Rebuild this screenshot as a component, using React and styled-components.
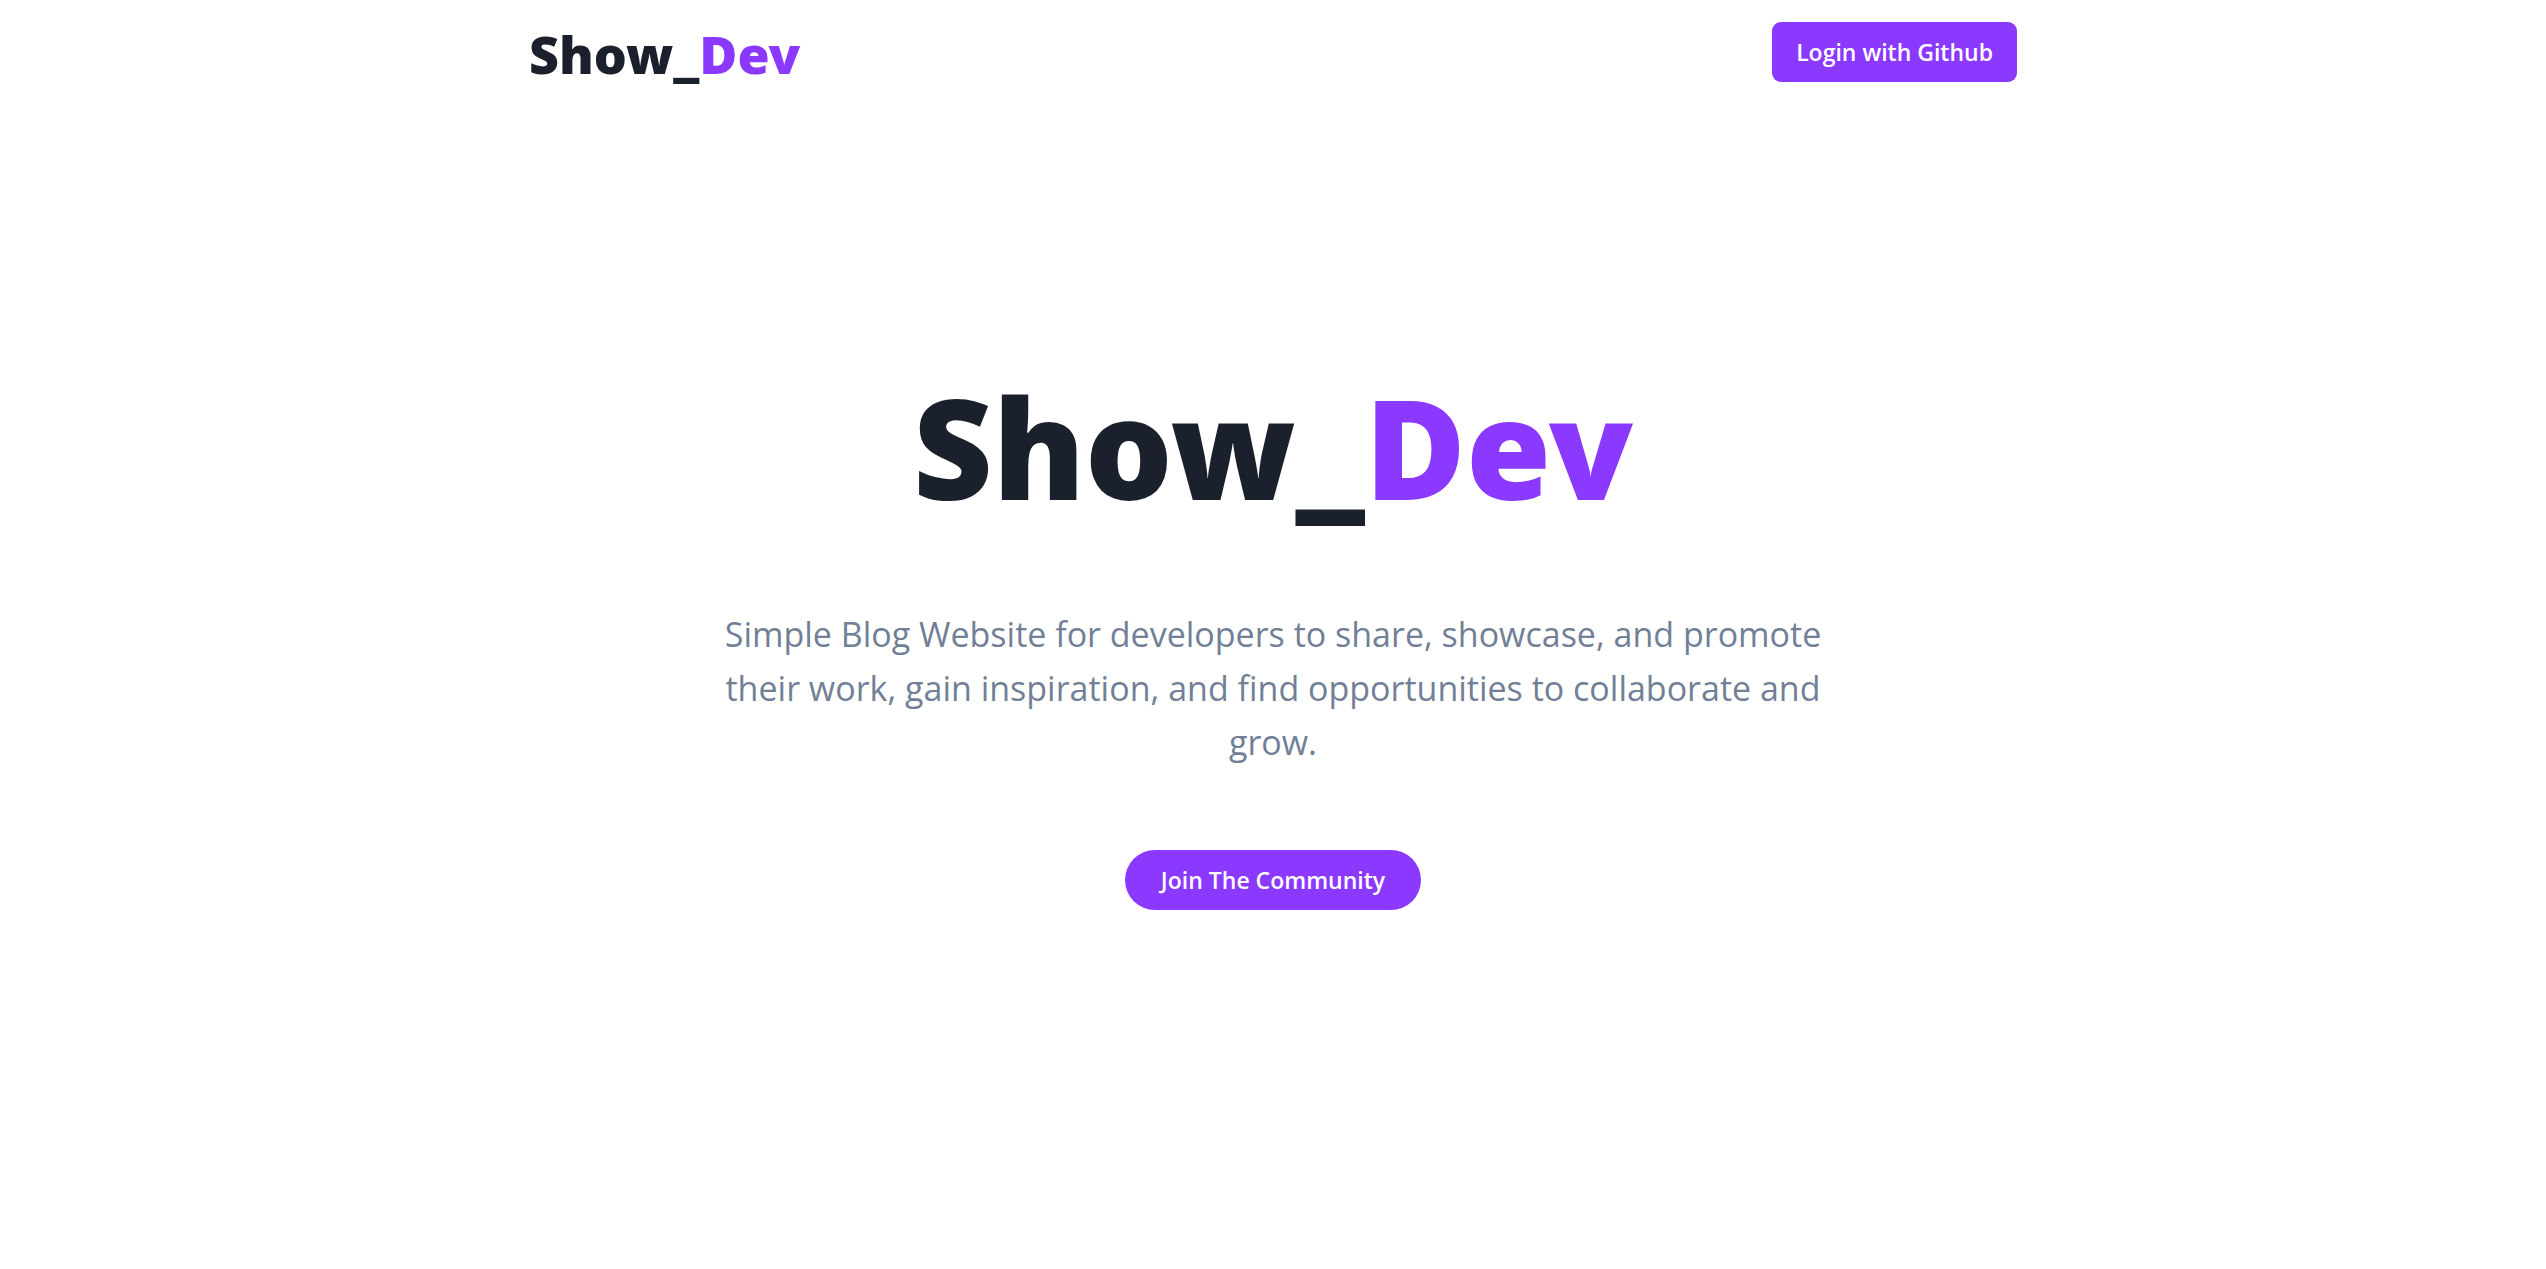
import React from "react";
import styled, { createGlobalStyle } from "styled-components";

const GlobalStyle = createGlobalStyle`
  *, *::before, *::after { box-sizing: border-box; }
  body {
    margin: 0;
    background: #ffffff;
    color: #1a202c;
    font-family: "Segoe UI", "Open Sans", "Noto Sans", sans-serif;
    font-size: 24px;
    line-height: 36px;
  }
`;

const Container = styled.div`
  width: 100%;
  max-width: 1536px;
  margin: 0 auto;
  padding: 0 24px;
`;

const Header = styled.header`
  display: flex;
  align-items: center;
  justify-content: space-between;
  padding: 10px 0;
`;

const HomeLink = styled.a`
  color: inherit;
  text-decoration: none;
`;

const Wordmark = styled.span`
  display: block;
  padding-top: ${({ $large }) => ($large ? "0" : "4px")};
  font-family: "Segoe UI", "Noto Sans", "Open Sans", sans-serif;
  font-size: ${({ $large }) => ($large ? "138px" : "52px")};
  line-height: ${({ $large }) => ($large ? "160px" : "80px")};
  font-weight: 900;
`;

const Accent = styled.span`
  color: #8b38ff;
`;

const Button = styled.button`
  height: 60px;
  padding: 0 ${({ $pill }) => ($pill ? "36px" : "24px")};
  border: 0;
  border-radius: ${({ $pill }) => ($pill ? "30px" : "9px")};
  background: #8b38ff;
  color: #ffffff;
  font-family: inherit;
  font-size: 23px;
  line-height: 28px;
  font-weight: 600;
  cursor: pointer;
`;

const Hero = styled.main`
  display: flex;
  flex-direction: column;
  align-items: center;
  gap: 81px;
  padding: 262px 0 96px;
  text-align: center;
`;

const Title = styled.h1`
  margin: 0;
`;

const Lead = styled.p`
  max-width: 1152px;
  margin: 0;
  color: #718096;
  font-size: 34px;
  line-height: 54px;
`;

function Brand({ large }) {
  return (
    <Wordmark $large={large}>
      Show_<Accent>Dev</Accent>
    </Wordmark>
  );
}

export default function App() {
  return (
    <>
      <GlobalStyle />
      <Container>
        <Header>
          <HomeLink href="/">
            <Brand />
          </HomeLink>
          <Button type="button">Login with Github</Button>
        </Header>
        <Hero>
          <Title>
            <Brand large />
          </Title>
          <Lead>
            Simple Blog Website for developers to share, showcase, and promote
            their work, gain inspiration, and find opportunities to collaborate
            and grow.
          </Lead>
          <Button type="button" $pill>
            Join The Community
          </Button>
        </Hero>
      </Container>
    </>
  );
}
